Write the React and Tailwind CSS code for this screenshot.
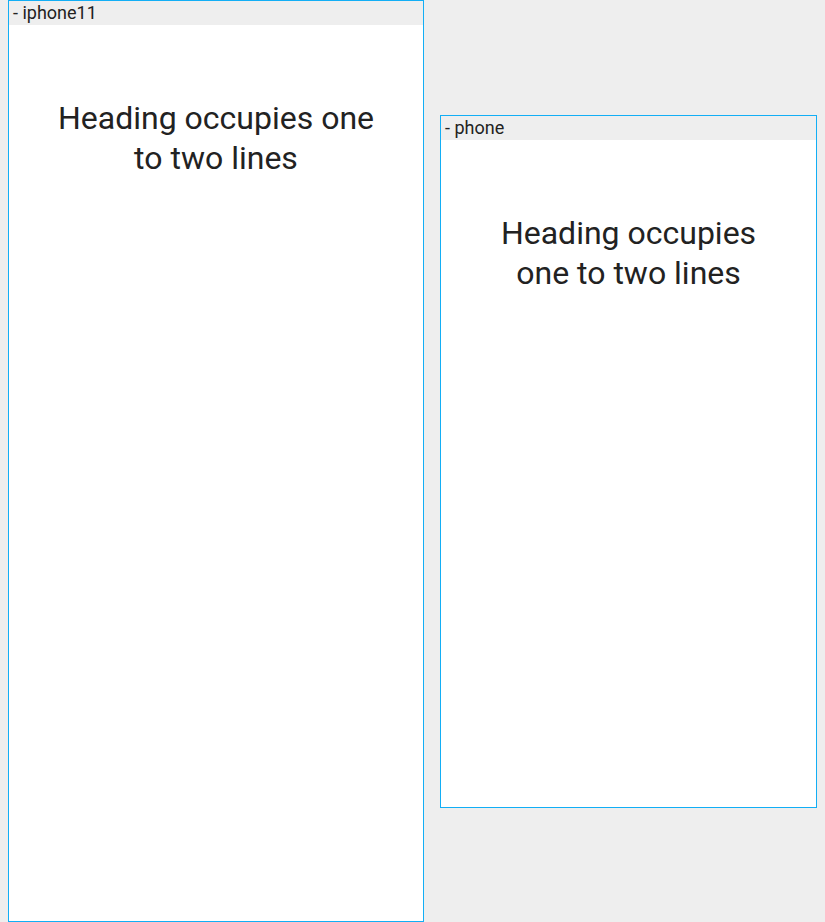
export default function App() {
  return (
    <div className="min-h-[922px] bg-[#eeeeee] font-['Roboto',sans-serif] text-[#222222]">
      <div className="flex items-start gap-4 pl-2">
        <Frame label="iphone11" width="w-[416px]" height="h-[922px]" />
        <div className="pt-[115px]">
          <Frame label="phone" width="w-[377px]" height="h-[693px]" />
        </div>
      </div>
    </div>
  );
}

function Frame({ label, width, height }) {
  return (
    <div className={`flex flex-col border border-[#12aef5] bg-white ${width} ${height}`}>
      <div className="h-6 bg-[#eeeeee] px-1 text-[18px] leading-6">- {label}</div>
      <div className="px-8 pt-[73px] text-center text-[32px] leading-10 font-normal">
        Heading occupies one to two lines
      </div>
    </div>
  );
}
